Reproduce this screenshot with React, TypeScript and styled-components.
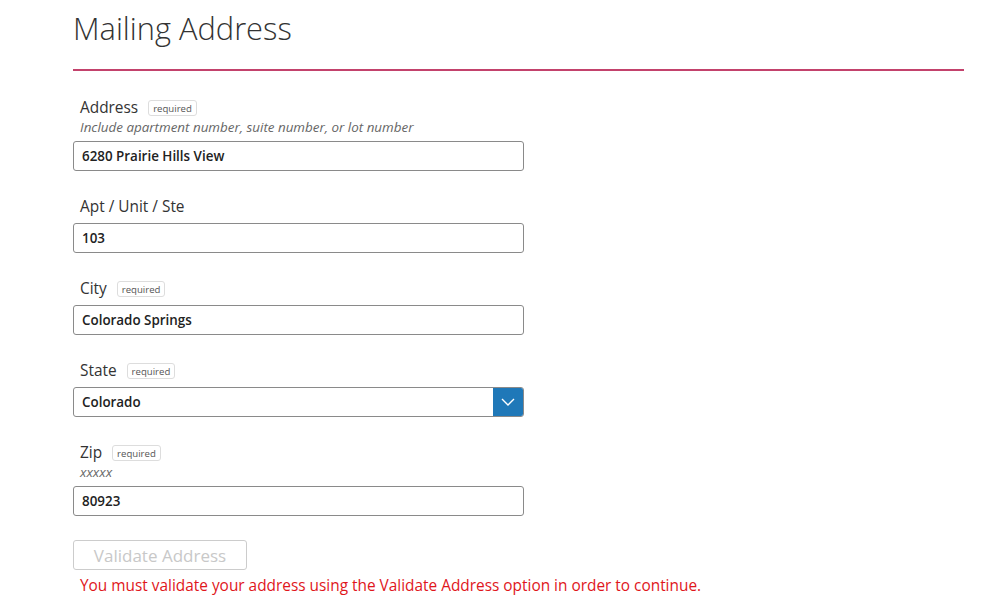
import React from 'react';
import styled, { createGlobalStyle } from 'styled-components';

const GlobalStyle = createGlobalStyle`
  body {
    margin: 0;
    background: #ffffff;
    font-family: 'Open Sans', 'Liberation Sans', sans-serif;
    color: #333333;
  }
`;

const Page = styled.div`
  width: 891px;
  padding: 6px 0 0 73px;
`;

const Title = styled.h1`
  margin: 0;
  font-size: 30.8px;
  line-height: 44px;
  font-weight: 300;
  color: #333333;
`;

const Rule = styled.hr`
  margin: 19px 0 27px 0;
  border: none;
  height: 2px;
  background-color: #c3426c;
`;

const Form = styled.form`
  width: 451px;
  display: flex;
  flex-direction: column;
`;

const Field = styled.div`
  display: flex;
  flex-direction: column;
  margin-bottom: 26px;

  &:nth-of-type(5) {
    margin-bottom: 24px;
  }
`;

const LabelRow = styled.div<{ $hasHint?: boolean }>`
  display: flex;
  align-items: center;
  gap: 10px;
  height: 20px;
  padding-left: 7px;
  margin-bottom: ${(p) => (p.$hasHint ? '0' : '6px')};
`;

const Label = styled.label`
  font-size: 15.4px;
  line-height: 20px;
  color: #333333;
`;

const Badge = styled.span`
  display: inline-flex;
  align-items: center;
  height: 14px;
  padding: 0 4px;
  border: 1px solid #dddddd;
  border-radius: 3px;
  font-size: 9.6px;
  color: #555555;
`;

const Hint = styled.div`
  padding-left: 7px;
  font-size: 13.4px;
  line-height: 18px;
  font-style: italic;
  color: #666666;
  margin-bottom: 5px;
`;

const Input = styled.input`
  box-sizing: border-box;
  width: 100%;
  height: 30px;
  padding: 0 8px;
  border: 1px solid #8a8a8a;
  border-radius: 3px;
  font-family: 'Open Sans', 'Liberation Sans', sans-serif;
  font-size: 13.4px;
  font-weight: 600;
  color: #222222;
  outline: none;
`;

const SelectBox = styled.div`
  box-sizing: border-box;
  display: flex;
  width: 100%;
  height: 30px;
  border: 1px solid #8a8a8a;
  border-radius: 3px;
  overflow: hidden;
`;

const SelectValue = styled.div`
  flex: 1;
  display: flex;
  align-items: center;
  padding: 0 8px;
  font-size: 13.4px;
  font-weight: 600;
  color: #222222;
`;

const SelectButton = styled.div`
  width: 30px;
  display: flex;
  align-items: center;
  justify-content: center;
  background-color: #1f78b8;
`;

const ValidateButton = styled.button`
  box-sizing: border-box;
  width: 174px;
  height: 30px;
  padding: 0;
  border: 1px solid #cccccc;
  border-radius: 3px;
  background: #ffffff;
  font-family: 'Open Sans', 'Liberation Sans', sans-serif;
  font-size: 17px;
  color: #c8c8c8;
`;

const ErrorText = styled.p`
  margin: 5px 0 0 7px;
  font-size: 15.4px;
  line-height: 22px;
  color: #e0161b;
  white-space: nowrap;
`;

const Chevron = () => (
  <svg width="14" height="8" viewBox="0 0 14 8" fill="none">
    <path d="M1 1l6 6 6-6" stroke="#ffffff" strokeWidth="1.4" />
  </svg>
);

const App = () => {
  return (
    <Page>
      <GlobalStyle />
      <Title>Mailing Address</Title>
      <Rule />
      <Form onSubmit={(e) => e.preventDefault()}>
        <Field>
          <LabelRow $hasHint>
            <Label>Address</Label>
            <Badge>required</Badge>
          </LabelRow>
          <Hint>Include apartment number, suite number, or lot number</Hint>
          <Input defaultValue="6280 Prairie Hills View" />
        </Field>
        <Field>
          <LabelRow>
            <Label>Apt / Unit / Ste</Label>
          </LabelRow>
          <Input defaultValue="103" />
        </Field>
        <Field>
          <LabelRow>
            <Label>City</Label>
            <Badge>required</Badge>
          </LabelRow>
          <Input defaultValue="Colorado Springs" />
        </Field>
        <Field>
          <LabelRow>
            <Label>State</Label>
            <Badge>required</Badge>
          </LabelRow>
          <SelectBox>
            <SelectValue>Colorado</SelectValue>
            <SelectButton><Chevron /></SelectButton>
          </SelectBox>
        </Field>
        <Field>
          <LabelRow $hasHint>
            <Label>Zip</Label>
            <Badge>required</Badge>
          </LabelRow>
          <Hint>xxxxx</Hint>
          <Input defaultValue="80923" />
        </Field>
        <div>
          <ValidateButton type="button" disabled>Validate Address</ValidateButton>
        </div>
        <ErrorText>You must validate your address using the Validate Address option in order to continue.</ErrorText>
      </Form>
    </Page>
  );
};

export default App;
